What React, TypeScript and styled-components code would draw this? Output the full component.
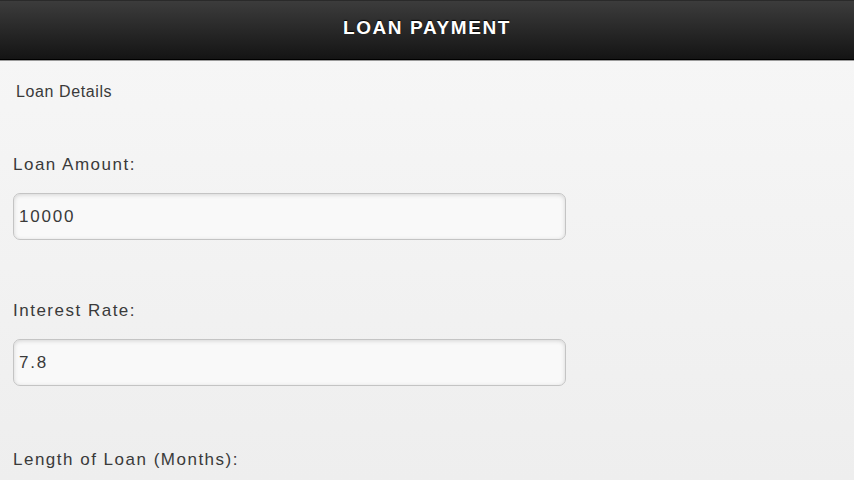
import React from "react";
import styled, { createGlobalStyle } from "styled-components";

const GlobalStyle = createGlobalStyle`
  html, body {
    margin: 0;
    padding: 0;
    height: 100%;
  }
  body {
    font-family: "Liberation Sans", Arial, sans-serif;
    background: linear-gradient(#f7f7f7, #eeeeee);
    min-height: 480px;
    overflow: hidden;
  }
`;

export default function App() {
  return (
    <Page>
      <GlobalStyle />
      <Header>
        <Title>LOAN PAYMENT</Title>
      </Header>
      <Content>
        <SectionTitle>Loan Details</SectionTitle>
        <Label gap={47}>Loan Amount:</Label>
        <Input defaultValue="10000" />
        <Label gap={58}>Interest Rate:</Label>
        <Input defaultValue="7.8" />
        <Label gap={61}>Length of Loan (Months):</Label>
      </Content>
    </Page>
  );
}

const Page = styled.div`
  width: 854px;
  height: 480px;
  display: flex;
  flex-direction: column;
  background: linear-gradient(#f7f7f7, #eeeeee);
`;

const Header = styled.header`
  flex: none;
  height: 60px;
  box-sizing: border-box;
  padding-bottom: 5px;
  display: flex;
  align-items: center;
  justify-content: center;
  background: linear-gradient(#3c3c3c, #141414);
  border-top: 1px solid #2a2a2a;
  border-bottom: 1px solid #000;
  box-shadow: 0 1px 0 #9a9a9a;
`;

const Title = styled.h1`
  margin: 0;
  color: #fff;
  font-size: 19px;
  font-weight: bold;
  letter-spacing: 1.6px;
  text-shadow: 0 -1px 1px #000;
`;

const Content = styled.main`
  display: flex;
  flex-direction: column;
  align-items: flex-start;
  padding: 19px 13px 0;
`;

const SectionTitle = styled.div`
  font-size: 16px;
  line-height: 26px;
  letter-spacing: 0.6px;
  color: #3a3a3a;
  padding-left: 3px;
`;

const Label = styled.label<{ gap: number }>`
  display: block;
  margin-top: ${(p) => p.gap}px;
  font-size: 17px;
  line-height: 26px;
  letter-spacing: 1.5px;
  color: #3a3a3a;
`;

const Input = styled.input`
  box-sizing: border-box;
  margin-top: 15px;
  width: 553px;
  height: 47px;
  padding: 0 5px;
  font-family: "Liberation Sans", Arial, sans-serif;
  font-size: 17px;
  letter-spacing: 1.8px;
  color: #3a3a3a;
  background: #f9f9f9;
  border: 1px solid #c4c4c4;
  border-radius: 7px;
  box-shadow: inset 0 1px 4px rgba(0, 0, 0, 0.15);
  outline: none;
`;
